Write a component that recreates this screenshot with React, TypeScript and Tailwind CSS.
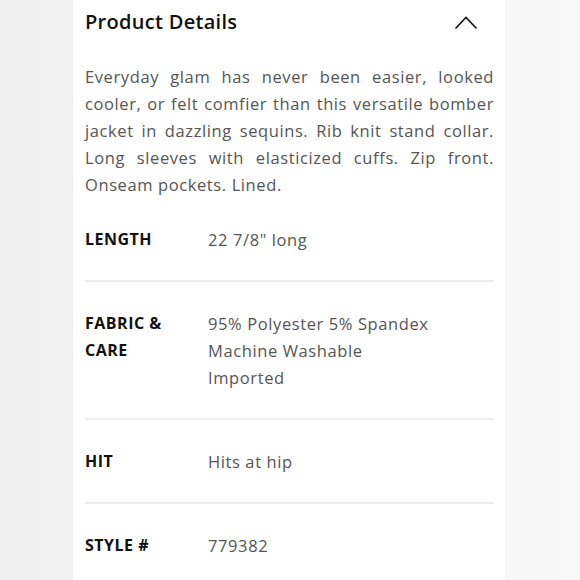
import type { ReactNode } from "react";

const FONT = { fontFamily: '"Open Sans", "Noto Sans", sans-serif' };

// Description broken into its rendered lines so the justify matches.
const DESCRIPTION = [
  "Everyday glam has never been easier, looked",
  "cooler, or felt comfier than this versatile bomber",
  "jacket in dazzling sequins. Rib knit stand collar.",
  "Long sleeves with elasticized cuffs. Zip front.",
  "Onseam pockets. Lined.",
];

interface Spec {
  label: ReactNode;
  value: ReactNode;
}

const SPECS: Spec[] = [
  { label: "LENGTH", value: '22 7/8" long' },
  {
    label: (
      <>
        FABRIC &amp;
        <br />
        CARE
      </>
    ),
    value: (
      <>
        95% Polyester 5% Spandex
        <br />
        Machine Washable
        <br />
        Imported
      </>
    ),
  },
  { label: "HIT", value: "Hits at hip" },
  { label: "STYLE #", value: "779382" },
];

function ChevronUp() {
  return (
    <svg width="24" height="15" viewBox="0 0 24 15" fill="none" className="mr-[16px]">
      <path d="M1.5 13.5 L12 2.5 L22.5 13.5" stroke="#111" strokeWidth="1.6" />
    </svg>
  );
}

export default function App() {
  return (
    <div
      className="min-h-[580px] w-full bg-gradient-to-r from-[#efefef] to-[#f8f8f8]"
      style={FONT}
    >
      <div className="mx-auto min-h-[580px] w-[434px] bg-white px-3 border-r border-[#f0f0f0]">
        <div className="flex h-[44px] items-center justify-between">
          <h2 className="text-[20px] font-semibold tracking-[0.3px] text-[#111]">
            Product Details
          </h2>
          <ChevronUp />
        </div>

        <div className="mt-[19px] text-[16.5px] leading-[27px] tracking-[0.6px] text-[#555]">
          {DESCRIPTION.map((line, i) => (
            <span
              key={i}
              className={
                i < DESCRIPTION.length - 1
                  ? "block text-justify [text-align-last:justify]"
                  : "block"
              }
            >
              {line}
            </span>
          ))}
        </div>

        <div className="flex flex-col">
          {SPECS.map((spec, i) => (
            <div
              key={i}
              className={
                "grid grid-cols-[123px_1fr] py-[27.5px] text-[16px] leading-[27px] " +
                (i < SPECS.length - 1 ? "border-b-2 border-[#ededed]" : "")
              }
            >
              <div className="font-bold tracking-[0.5px] text-[#111]">{spec.label}</div>
              <div className="text-[16.5px] tracking-[0.6px] text-[#555]">{spec.value}</div>
            </div>
          ))}
        </div>
      </div>
    </div>
  );
}
